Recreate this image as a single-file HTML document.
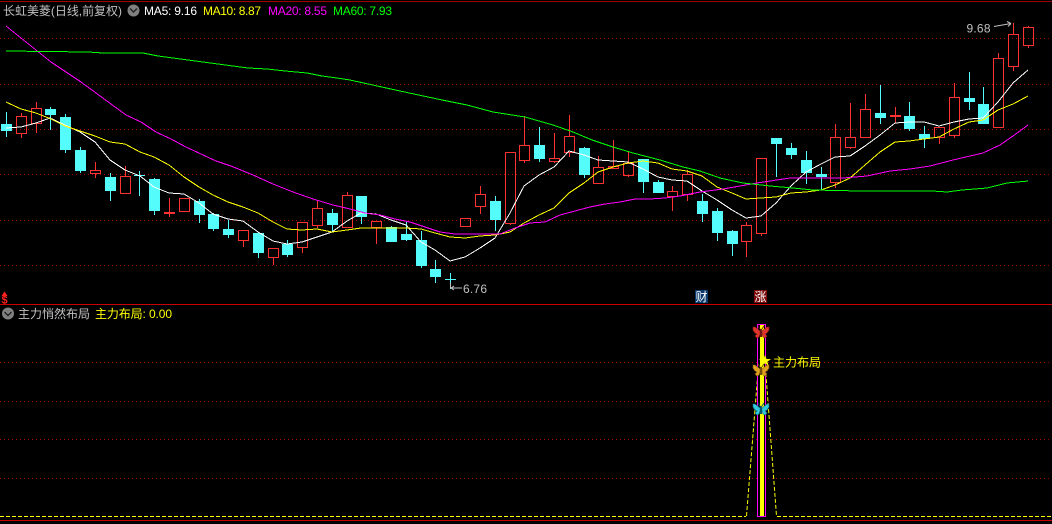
<!DOCTYPE html>
<html>
<head>
<meta charset="utf-8">
<style>
html,body{margin:0;padding:0;background:#000;width:1052px;height:524px;overflow:hidden}
svg{display:block}
text{font-family:"Liberation Sans","WenQuanYi Zen Hei","Noto Sans CJK SC",sans-serif;font-size:12px}
.l{fill:none;shape-rendering:crispEdges}
.p{fill:none}
</style>
</head>
<body>
<svg width="1052" height="524" viewBox="0 0 1052 524" xmlns="http://www.w3.org/2000/svg">
<rect width="1052" height="524" fill="#000"/>
<rect x="0" y="1" width="1052" height="1" fill="#a00000"/>
<!-- grid -->
<g stroke="#a00000" stroke-dasharray="1 3" class="p">
<path d="M0 38.500H1052M0 84.500H1052M0 129.500H1052M0 174.500H1052M0 220.500H1052M0 265.500H1052"/>
<path d="M0 362.500H1052M0 401.500H1052M0 439.500H1052M0 478.500H1052"/>
</g>
<rect x="0" y="304" width="1052" height="1" fill="#c80000"/>
<rect x="0" y="520" width="1052" height="1" fill="#c80000"/>

<!-- cyan candles -->
<path class="p" stroke="#54fcfc" d="M6.5 112V137M50.5 107V130M65.5 114V153M80.5 147V173M110.5 173V201M139.5 171V196M134 175.5H145M154.5 178V215M199.5 199V223M213.5 213V231M228.5 220V238M258.5 232V258M287.5 240V257M332.5 209V232M361.5 196V224M391.5 226V242M406.5 222V241M421.5 231V268M435.5 260V283M450.5 273V289M445 279.5H456M495.5 196V231M539.5 127V162M584.5 147V178M643.5 159V193M658.5 180V193M702.5 194V222M717.5 208V241M732.5 230V256M776.5 138V177M791.5 143V159M806.5 151V184M821.5 167V190M880.5 85V124M909.5 102V131M924.5 126V148M969.5 72V110M983.5 87V124"/>
<path fill="#54fcfc" d="M1 124h11v7H1zM45 109h11v6H45zM60 117h11v33H60zM75 150h11v21H75zM105 177h11v14h-11zM149 179h11v32h-11zM194 201h11v14h-11zM208 214h11v15h-11zM223 229h11v6h-11zM253 233h11v20h-11zM282 244h11v11h-11zM327 213h11v12h-11zM356 196h11v21h-11zM386 227h11v15h-11zM401 234h11v6h-11zM416 240h11v26h-11zM430 269h11v8h-11zM490 201h11v19h-11zM534 145h11v14h-11zM579 148h11v27h-11zM638 159h11v23h-11zM653 182h11v11h-11zM697 201h11v13h-11zM712 211h11v22h-11zM727 231h11v13h-11zM771 138h11v6h-11zM786 148h11v7h-11zM801 160h11v13h-11zM816 174h11v3h-11zM875 113h11v5h-11zM904 116h11v13h-11zM919 134h11v5h-11zM964 98h11v4h-11zM978 104h11v20h-11z"/>

<!-- red candles -->
<path class="p" stroke="#ff3232" d="M21.5 113V116M21.5 134V138M16.5 116.500h10v17h-10zM36.5 102V108M36.5 123V133M31.5 108.500h10v15h-10zM95.5 162V170M95.5 174V178M90.5 170.500h10v3h-10zM125.5 166V176M120.5 176.500h10v17h-10zM169.5 198V217M164.5 212.500h10v1h-10zM179.5 198.500h10v13h-10zM243.5 240V247M238.5 230.500h10v10h-10zM273.5 257V265M268.5 248.500h10v9h-10zM302.5 247V253M297.5 222.500h10v25h-10zM317.5 201V208M317.5 225V228M312.5 208.500h10v17h-10zM347.5 192V195M342.5 195.500h10v32h-10zM376.5 227V244M371.5 221.500h10v6h-10zM460.5 218.500h10v8h-10zM480.5 186V194M480.5 206V214M475.5 194.500h10v12h-10zM510.5 223V225M505.5 152.500h10v71h-10zM524.5 116V145M524.5 160V163M519.5 145.500h10v15h-10zM554.5 133V158M554.5 161V163M549.5 158.500h10v3h-10zM569.5 115V136M569.5 152V157M564.5 136.500h10v16h-10zM598.5 156V167M593.5 167.500h10v16h-10zM613.5 140V166M608.5 166.500h10v2h-10zM628.5 152V163M628.5 175V177M623.5 163.500h10v12h-10zM672.5 186V191M672.5 197V211M667.5 191.500h10v5h-10zM687.5 170V174M687.5 194V201M682.5 174.500h10v20h-10zM746.5 222V225M746.5 241V257M741.5 225.500h10v16h-10zM761.5 233V236M756.5 158.500h10v75h-10zM835.5 124V137M835.5 182V188M830.5 137.500h10v45h-10zM850.5 103V137M850.5 147V149M845.5 137.500h10v10h-10zM865.5 94V109M860.5 109.500h10v28h-10zM895.5 107V123M890.5 115.500h10v1h-10zM939.5 137V144M934.5 127.500h10v10h-10zM954.5 83V97M954.5 135V138M949.5 97.500h10v38h-10zM998.5 53V58M993.5 58.500h10v69h-10zM1013.5 23V34M1013.5 66V71M1008.5 34.500h10v32h-10zM1028.5 26V27M1028.5 45V48M1023.5 27.500h10v18h-10z"/>

<!-- MA lines -->
<polyline class="l" stroke="#fff" points="6,128 21,127 36,123 50,118 65,125 80,132 95,142 110,160 125,170 140,176 154,187 169,193 184,194 199,203 213,214 228,219 243,221 258,232 273,241 287,244 302,242 317,237 332,232 347,221 361,213 376,214 391,220 406,225 421,242 435,250 450,261 465,257 480,248 495,238 510,213 524,186 539,175 554,167 569,151 584,155 598,160 613,161 628,162 643,169 658,177 672,180 687,181 702,191 717,200 732,210 746,218 761,216 776,203 791,186 806,172 821,164 835,157 850,156 865,146 880,135 895,123 909,122 924,122 939,126 954,122 969,119 983,118 998,102 1013,83 1028,70"/>
<polyline class="l" stroke="#ffff00" points="6,102 21,109 36,113 51,119 65,126 80,131 95,136 110,142 125,144 140,152 154,157 169,165 184,177 199,187 213,195 228,202 243,207 258,213 273,222 287,229 302,230 317,229 332,232 347,230 361,228 376,228 391,228 406,228 421,229 435,233 450,237 465,238 480,236 495,235 510,232 524,223 539,215 554,208 569,193 584,183 598,172 613,167 628,163 643,161 658,163 672,169 687,171 702,176 717,187 732,193 746,199 761,198 776,197 791,193 806,192 821,190 835,185 850,178 865,165 880,152 895,142 909,141 924,139 939,137 954,129 969,122 983,120 998,110 1013,104 1028,96"/>
<polyline class="l" stroke="#ff00ff" points="6,26 21,38 36,50 51,62 66,72 81,82 96,93 111,104 126,115 141,122 156,132 171,139 186,147 201,154 216,161 231,166 253,175 273,184 293,192 313,199 333,205 350,209 365,213 380,215 395,219 410,222 425,227 440,232 455,234 470,234 485,234 500,234 515,228 530,223 545,222 560,215 575,211 590,207 605,204 620,202 635,199 650,199 665,198 680,196 700,192 723,189 757,183 790,178 807,178 823,178 843,178 867,176 890,171 910,169 930,166 953,160 983,153 1000,145 1013,136 1028,125"/>
<polyline class="l" stroke="#00ff00" points="6,51 88,52 103,53 143,53 158,56 173,58 188,60 203,62 218,64 233,66 248,68 267,69 285,71 307,73 322,76 337,78 350,80 400,91 442,100 467,105 493,112 525,117 553,125 573,132 592,140 613,147 633,153 660,160 683,167 700,171 720,178 743,183 770,186 793,188 813,190 860,191 932,191 947,192 962,190 987,188 1007,183 1028,181"/>

<!-- legend -->
<text x="3" y="15" fill="#c0c0c0" textLength="119">长虹美菱(日线,前复权)</text>
<circle cx="133.500" cy="10.500" r="6" fill="#808080"/>
<path d="M130 8.500l3.500 3.500 3.500-3.500" fill="none" stroke="#222" stroke-width="1.400"/>
<text x="144" y="15" fill="#fff" textLength="53">MA5: 9.16</text>
<text x="203" y="15" fill="#ffff00" textLength="58">MA10: 8.87</text>
<text x="268" y="15" fill="#ff00ff" textLength="59">MA20: 8.55</text>
<text x="333" y="15" fill="#00ff00" textLength="59">MA60: 7.93</text>

<!-- price labels -->
<text x="463" y="293" fill="#c0c0c0" textLength="24">6.76</text>
<path d="M450.500 283v5M451 288H462M451 288l3-2M451 288l3 2" stroke="#c0c0c0" fill="none"/>
<text x="966.500" y="32.500" fill="#c0c0c0" textLength="24">9.68</text>
<path d="M994 26.500L1011 23.500M1011 23.500l-4-2M1011 23.500l-3 3" stroke="#c0c0c0" fill="none"/>

<!-- marks -->
<text x="1.500" y="303.500" fill="#ff2020" font-weight="bold" style="font-size:11px">$</text>
<path d="M4.500 291.500l-3 4.500h6z" fill="#ff2020"/>
<rect x="695" y="290" width="13" height="13" fill="#0a3a6e"/>
<text x="695.500" y="301" fill="#fff">财</text>
<rect x="754" y="290" width="13" height="13" fill="#7a0a0a"/>
<text x="754.500" y="301" fill="#fff">涨</text>

<!-- lower panel legend -->
<circle cx="8" cy="313.500" r="6" fill="#808080"/>
<path d="M4.500 312l3.500 3.500 3.500-3.500" fill="none" stroke="#222" stroke-width="1.400"/>
<text x="18" y="318" fill="#c0c0c0">主力悄然布局</text>
<text x="95" y="318" fill="#ffff00" textLength="77">主力布局: 0.00</text>

<!-- lower panel plot -->
<path class="p" stroke="#ffff00" stroke-dasharray="4 2" d="M0 516.500H746M777 516.500H1052"/>
<path fill="none" stroke="#ffff00" stroke-dasharray="4 2" d="M746.500 516L757 384L761 325L766.500 382L776.500 516"/>
<rect x="757.500" y="324.500" width="8" height="192" fill="#000" stroke="#ff00ff"/>
<rect x="760" y="325" width="4" height="191" fill="#ffff00"/>
<path d="M765 355l1.500 4h4.500l-3.600 2.700 1.400 4.300-3.800-2.600-3.800 2.600 1.400-4.300-3.600-2.700h4.500z" fill="#ffff00"/>
<text x="773" y="366.500" fill="#ffff00">主力布局</text>

<!-- butterflies -->
<g transform="translate(761,332)">
<path d="M-1 -1L-6 -5L-8 -5L-8 -2L-6 1L-4 2L-6 4L-4 6L-2 5L-1 2ZM1 -1L6 -5L8 -5L8 -2L6 1L4 2L6 4L4 6L2 5L1 2Z" fill="#e0352b" stroke="#8a1f18" stroke-width=".6"/>
<path d="M-1 -3L-3 -6M1 -3L3 -6" stroke="#6a1810" fill="none"/><rect x="-1" y="-3" width="2" height="8" fill="#6a1810"/>
</g>
<g transform="translate(761,370)">
<path d="M-1 -1L-6 -5L-8 -5L-8 -2L-6 1L-4 2L-6 4L-4 6L-2 5L-1 2ZM1 -1L6 -5L8 -5L8 -2L6 1L4 2L6 4L4 6L2 5L1 2Z" fill="#e0a020" stroke="#8a6010" stroke-width=".6"/>
<path d="M-1 -3L-3 -6M1 -3L3 -6" stroke="#70500c" fill="none"/><rect x="-1" y="-3" width="2" height="8" fill="#70500c"/>
</g>
<g transform="translate(761,409)">
<path d="M-1 -1L-6 -5L-8 -5L-8 -2L-6 1L-4 2L-6 4L-4 6L-2 5L-1 2ZM1 -1L6 -5L8 -5L8 -2L6 1L4 2L6 4L4 6L2 5L1 2Z" fill="#30c8dc" stroke="#107888" stroke-width=".6"/>
<path d="M-1 -3L-3 -6M1 -3L3 -6" stroke="#0c5a68" fill="none"/><rect x="-1" y="-3" width="2" height="8" fill="#0c5a68"/>
</g>
</svg>
</body>
</html>
